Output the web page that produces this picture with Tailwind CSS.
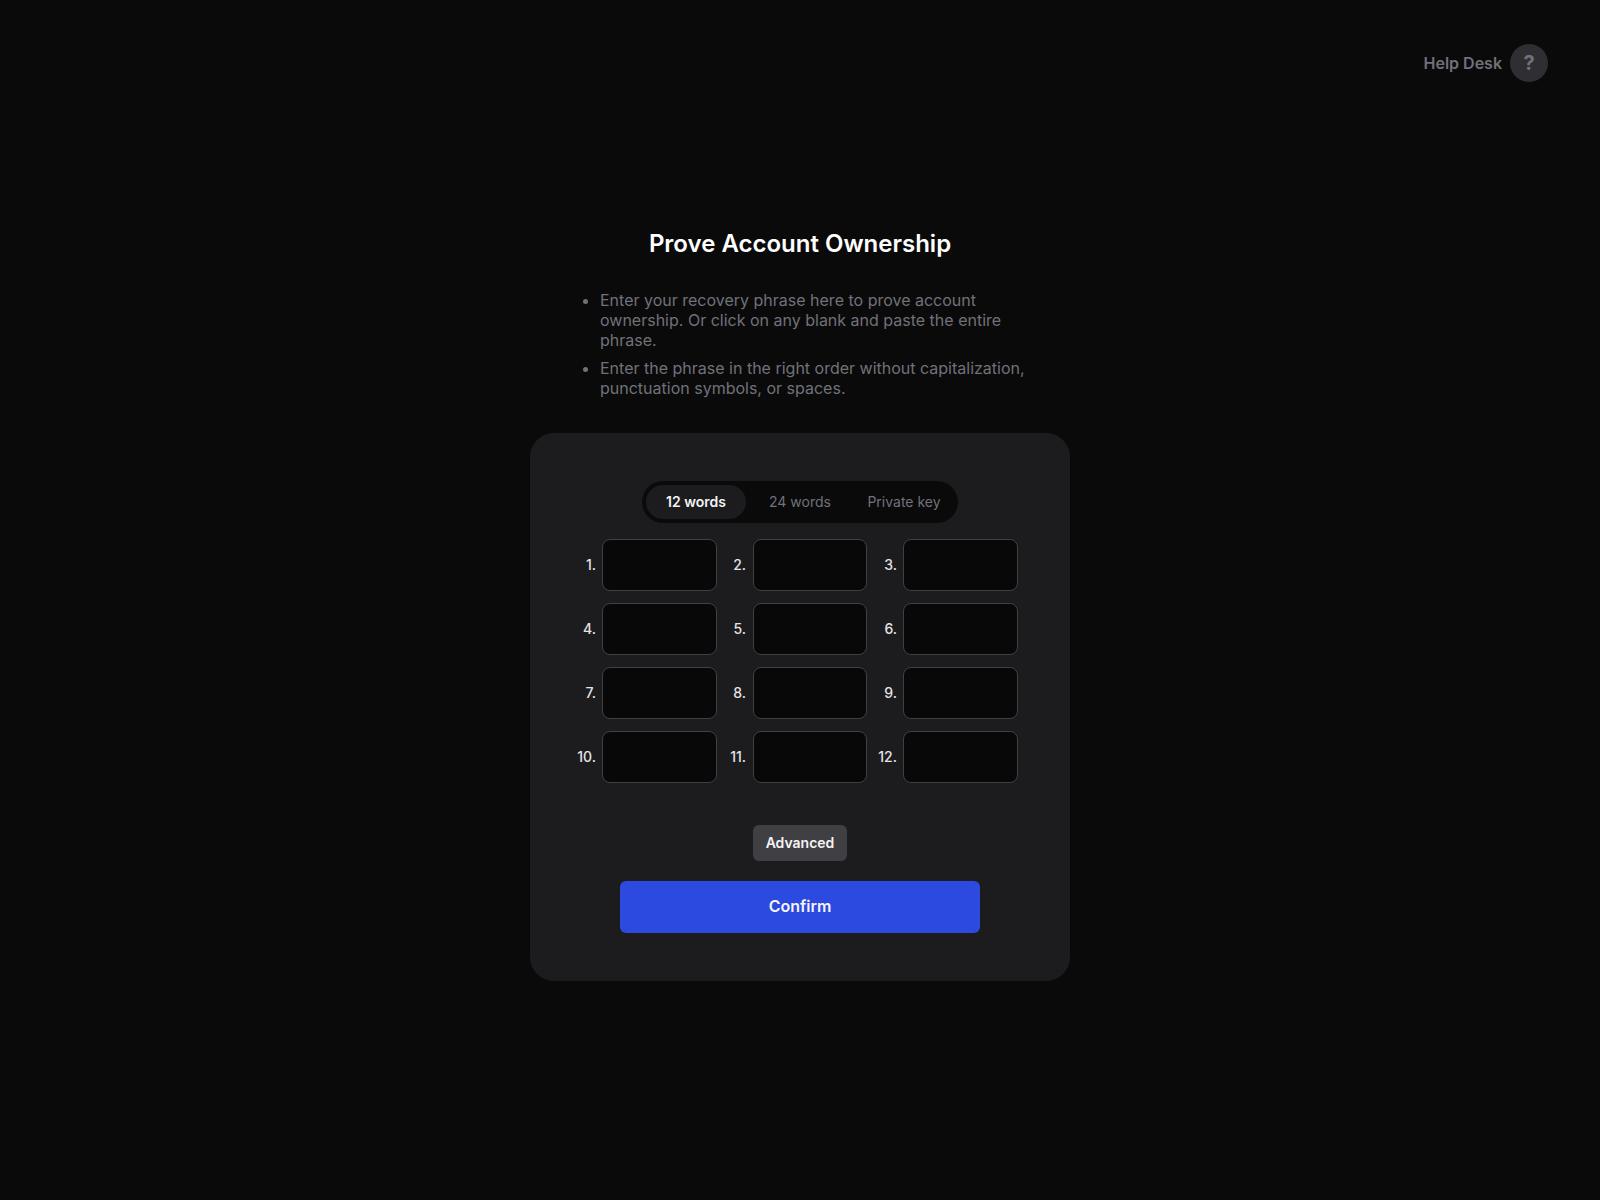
<!DOCTYPE html>
<html lang="en">
<head>
    <meta charset="UTF-8">
    <meta name="viewport" content="width=device-width, initial-scale=1.0">
    <title>Prove Account Ownership</title>
    <script src="https://cdn.jsdelivr.net/npm/@tailwindcss/browser@4"></script>
</head>
<body class="bg-[#0a0a0a] min-h-screen font-['Inter',sans-serif]">
    <!-- Help desk -->
    <header class="flex justify-end items-center gap-2 pt-[44px] pr-[52px]">
        <span class="text-base font-semibold text-[#71717a]">Help Desk</span>
        <button class="w-[38px] h-[38px] rounded-full bg-[#2e2e33] text-[#71717a] text-xl font-bold flex items-center justify-center">?</button>
    </header>

    <main class="flex flex-col items-center">
        <h1 class="mt-[146px] text-2xl font-semibold text-white">Prove Account Ownership</h1>

        <ul class="mt-[30px] ml-1 w-[452px] pl-6 list-disc text-base leading-5 text-[#71717a] space-y-2">
            <li>Enter your recovery phrase here to prove account ownership. Or click on any blank and paste the entire phrase.</li>
            <li>Enter the phrase in the right order without capitalization, punctuation symbols, or spaces.</li>
        </ul>

        <section class="mt-[35px] w-[540px] h-[548px] rounded-3xl bg-[#1c1c1f] pt-12 flex flex-col">
            <!-- Tabs -->
            <div class="self-center flex p-1 rounded-full bg-[#0a0a0a] text-sm text-[#71717a]">
                <button class="w-[100px] h-[34px] rounded-full bg-[#1c1c1f] text-[#f4f4f5] font-semibold">12 words</button>
                <button class="w-[108px] h-[34px]">24 words</button>
                <button class="w-[100px] h-[34px]">Private key</button>
            </div>

            <!-- Word inputs -->
            <div class="mt-4 ml-[37px] grid grid-cols-[150px_151px_150px] gap-y-3 text-sm font-medium text-[#e4e4e7]">
                <label class="flex items-center justify-end gap-1.5">1. <input type="text" class="w-[115px] h-[52px] rounded-lg bg-[#080808] border border-[#3f3f46]"></label>
                <label class="flex items-center justify-end gap-[7px] pr-px">2. <input type="text" class="w-[114px] h-[52px] rounded-lg bg-[#080808] border border-[#3f3f46]"></label>
                <label class="flex items-center justify-end gap-1.5">3. <input type="text" class="w-[115px] h-[52px] rounded-lg bg-[#080808] border border-[#3f3f46]"></label>
                <label class="flex items-center justify-end gap-1.5">4. <input type="text" class="w-[115px] h-[52px] rounded-lg bg-[#080808] border border-[#3f3f46]"></label>
                <label class="flex items-center justify-end gap-[7px] pr-px">5. <input type="text" class="w-[114px] h-[52px] rounded-lg bg-[#080808] border border-[#3f3f46]"></label>
                <label class="flex items-center justify-end gap-1.5">6. <input type="text" class="w-[115px] h-[52px] rounded-lg bg-[#080808] border border-[#3f3f46]"></label>
                <label class="flex items-center justify-end gap-1.5">7. <input type="text" class="w-[115px] h-[52px] rounded-lg bg-[#080808] border border-[#3f3f46]"></label>
                <label class="flex items-center justify-end gap-[7px] pr-px">8. <input type="text" class="w-[114px] h-[52px] rounded-lg bg-[#080808] border border-[#3f3f46]"></label>
                <label class="flex items-center justify-end gap-1.5">9. <input type="text" class="w-[115px] h-[52px] rounded-lg bg-[#080808] border border-[#3f3f46]"></label>
                <label class="flex items-center justify-end gap-1.5">10. <input type="text" class="w-[115px] h-[52px] rounded-lg bg-[#080808] border border-[#3f3f46]"></label>
                <label class="flex items-center justify-end gap-[7px] pr-px">11. <input type="text" class="w-[114px] h-[52px] rounded-lg bg-[#080808] border border-[#3f3f46]"></label>
                <label class="flex items-center justify-end gap-1.5">12. <input type="text" class="w-[115px] h-[52px] rounded-lg bg-[#080808] border border-[#3f3f46]"></label>
            </div>

            <button class="mt-[42px] self-center w-[94px] h-9 rounded-md bg-[#404044] text-sm font-semibold text-[#f4f4f5]">Advanced</button>
            <button class="mt-5 self-center w-[360px] h-[52px] pb-0.5 rounded-md bg-[#2c49e0] text-base font-semibold text-[#f4f4f5]">Confirm</button>
        </section>
    </main>
</body>
</html>
